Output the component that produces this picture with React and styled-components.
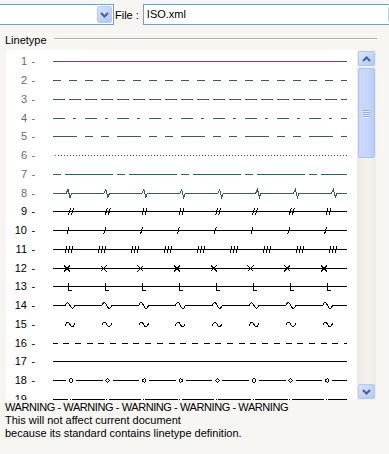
import React from 'react';
import styled, { createGlobalStyle } from 'styled-components';

const GlobalStyle = createGlobalStyle`
  html, body {
    margin: 0;
    padding: 0;
  }
  body {
    background: #f6f5f0;
    font-family: "Liberation Sans", Arial, sans-serif;
    font-size: 11px;
    color: #000;
  }
`;

const Window = styled.div`
  width: 389px;
  height: 454px;
  overflow: hidden;
  background: #f7f6f2;
`;

const TopBar = styled.div`
  display: flex;
  align-items: center;
  padding-top: 4px;
  height: 21px;
  overflow: hidden;
`;

const Combo = styled.div`
  flex: 0 0 ${(p) => p.$width}px;
  height: 21px;
  box-sizing: border-box;
  display: flex;
  align-items: center;
  background: #fff;
  border: 1px solid #7f9db9;
  border-left: ${(p) => (p.$cutLeft ? 'none' : '1px solid #7f9db9')};
  padding: 1px;
  padding-left: 3px;
`;

const ComboText = styled.span`
  flex: 1;
  line-height: 17px;
  white-space: nowrap;
`;

const DropButton = styled.div`
  width: 15px;
  height: 17px;
  box-sizing: border-box;
  display: flex;
  align-items: center;
  justify-content: center;
  background: linear-gradient(135deg, #d9e4fd 0%, #c1d2fb 55%, #b1c6f7 100%);
  border: 1px solid #b8caf5;
  border-radius: 2px;
`;

const FileLabel = styled.span`
  padding: 0 4px 0 1px;
  white-space: nowrap;
`;

const LegendRow = styled.div`
  display: flex;
  align-items: flex-start;
  margin-top: 8px;
  height: 14px;
  padding-left: 5px;
`;

const LegendText = styled.span`
  line-height: 14px;
`;

const Rule = styled.div`
  flex: 1;
  height: 1px;
  margin: 5px 12px 0 7px;
  background: #b3afa2;
  box-shadow: 0 1px 0 #fff;
`;

const Panel = styled.div`
  display: flex;
  margin: 3px 13px 0 6px;
  height: 350px;
`;

const List = styled.div`
  flex: 1;
  background: #fff;
  overflow: hidden;
  padding-top: 2.6px;
`;

const Row = styled.div`
  display: flex;
  align-items: center;
  height: 18.75px;
  color: ${(p) => (p.$muted ? '#5b736b' : '#000')};
`;

const Num = styled.span`
  width: 21px;
  text-align: right;
  line-height: 13px;
`;

const Dash = styled.span`
  width: 21.5px;
  padding-left: 4.5px;
  line-height: 13px;
`;

const Scrollbar = styled.div`
  width: 19px;
  box-sizing: border-box;
  padding: 1px;
  display: flex;
  flex-direction: column;
  background: linear-gradient(90deg, #eeebe2 0%, #f4f2ec 60%, #efece4 100%);
`;

const ScrollButton = styled.div`
  height: 15px;
  box-sizing: border-box;
  display: flex;
  align-items: center;
  justify-content: center;
  background: linear-gradient(135deg, #dce6fe 0%, #c3d4fc 55%, #b3c8f7 100%);
  border: 1px solid #b4c7f3;
  border-radius: 2px;
`;

const Track = styled.div`
  flex: 1;
  padding-top: 2px;
`;

const Thumb = styled.div`
  height: 90px;
  box-sizing: border-box;
  display: flex;
  flex-direction: column;
  align-items: center;
  justify-content: center;
  gap: 1px;
  background: linear-gradient(90deg, #c9d8fd 0%, #c6d6fc 60%, #b9ccf8 100%);
  border: 1px solid #aec3f2;
  border-radius: 2px;
`;

const Grip = styled.div`
  width: 7px;
  height: 1px;
  background: #8ea8e8;
  box-shadow: 0 1px 0 #eef3fe;
`;

const Notes = styled.div`
  padding: 1px 5px 0;
  line-height: 13px;
  white-space: nowrap;
`;

const NoteLine = styled.div`
  letter-spacing: ${(p) => (p.$caps ? '-0.42px' : 'normal')};
`;

const W = 294;
const Y = 9.5;
const at = (first, step, n) => Array.from({ length: n }, (_, i) => first + i * step);

const dashed = (dash, offset = 0, x1 = 0) => (c) => (
  <line x1={x1} y1={Y} x2={W} y2={Y} stroke={c} strokeDasharray={dash} strokeDashoffset={offset} />
);

const solid = (c) => <line x1={0} y1={Y} x2={W} y2={Y} stroke={c} />;

const withMarks = (marks, draw) => (c) => (
  <g stroke={c} fill="none">
    <line x1={0} y1={Y} x2={W} y2={Y} />
    {marks.map((x) => (
      <g key={x}>{draw(x)}</g>
    ))}
  </g>
);

const spikes = (c) => {
  let d = `M0 ${Y}`;
  at(15, 37.9, 8).forEach((x) => {
    d += ` L${x - 2} ${Y} L${x} ${Y - 4} L${x + 2} ${Y + 4} L${x + 3.5} ${Y}`;
  });
  d += ` L${W} ${Y}`;
  return <path d={d} stroke={c} fill="none" />;
};

const bumps = (c) => {
  let d = `M0 ${Y}`;
  at(17, 36.8, 8).forEach((x) => {
    d += ` L${x - 5} ${Y} Q${x - 2.5} ${Y - 6} ${x} ${Y} Q${x + 2.5} ${Y + 6} ${x + 5} ${Y}`;
  });
  d += ` L${W} ${Y}`;
  return <path d={d} stroke={c} fill="none" />;
};

const tildes = (c) => (
  <g stroke={c} fill="none">
    {at(17, 36.8, 8).map((x) => (
      <path
        key={x}
        d={`M${x - 5} ${Y + 1} Q${x - 2.5} ${Y - 5} ${x} ${Y} Q${x + 2.5} ${Y + 5} ${x + 5} ${Y - 1}`}
      />
    ))}
  </g>
);

const circles = (c) => {
  const xs = at(18, 36.6, 8);
  let d = `M0 ${Y}`;
  xs.forEach((x) => {
    d += ` H${x - 5} M${x + 5} ${Y}`;
  });
  d += ` H${W}`;
  return (
    <g stroke={c} fill="none">
      <path d={d} />
      {xs.map((x) => (
        <circle key={x} cx={x} cy={Y} r={1.7} />
      ))}
    </g>
  );
};

const dotted = (c) => {
  const xs = at(17, 36.6, 8);
  let d = `M0 ${Y}`;
  xs.forEach((x) => {
    d += ` H${x - 2} M${x + 2} ${Y}`;
  });
  d += ` H${W}`;
  return (
    <g stroke={c} fill="none">
      <path d={d} />
      {xs.map((x) => (
        <rect key={x} x={x - 0.5} y={Y - 1} width={1} height={1} fill={c} stroke="none" />
      ))}
    </g>
  );
};

const LINETYPES = [
  solid,
  dashed('8 8'),
  dashed('12 4'),
  dashed('12 8 3 9'),
  dashed('24 8 8 8 8 8'),
  dashed('1 2', 0, 2),
  dashed('8 4 48 4'),
  spikes,
  withMarks(at(18, 36.8, 8), (x) => (
    <>
      <line x1={x - 2.5} y1={Y + 3.5} x2={x - 0.5} y2={Y - 3.5} />
      <line x1={x + 0.5} y1={Y + 3.5} x2={x + 2.5} y2={Y - 3.5} />
    </>
  )),
  withMarks(at(15, 36.8, 8), (x) => <line x1={x - 1} y1={Y + 3.5} x2={x + 1} y2={Y - 3.5} />),
  withMarks(at(16, 33, 9), (x) => (
    <>
      <line x1={x - 4} y1={Y + 3} x2={x - 2} y2={Y - 3} />
      <line x1={x - 1} y1={Y + 3} x2={x + 1} y2={Y - 3} />
      <line x1={x + 2} y1={Y + 3} x2={x + 4} y2={Y - 3} />
    </>
  )),
  withMarks(at(14, 36.7, 8), (x) => (
    <>
      <line x1={x - 3} y1={Y - 3} x2={x + 3} y2={Y + 3} />
      <line x1={x - 3} y1={Y + 3} x2={x + 3} y2={Y - 3} />
    </>
  )),
  withMarks(at(15, 37, 8), (x) => (
    <>
      <line x1={x} y1={Y - 4} x2={x} y2={Y + 4} />
      <line x1={x} y1={Y + 4} x2={x + 4} y2={Y + 4} />
    </>
  )),
  bumps,
  tildes,
  dashed('6 5.7', 1.5),
  solid,
  circles,
  dotted,
];

function Chevron({ up }) {
  return (
    <svg width="9" height="6" viewBox="0 0 9 6">
      <path
        d={up ? 'M1 5 L4.5 1.5 L8 5' : 'M1 1 L4.5 4.5 L8 1'}
        stroke="#4d6185"
        strokeWidth="2"
        fill="none"
      />
    </svg>
  );
}

function LinetypeRow({ index, draw }) {
  const muted = index < 8;
  const color = muted ? '#3a5f51' : '#000';
  return (
    <Row $muted={muted}>
      <Num>{index + 1}</Num>
      <Dash>-</Dash>
      <svg width={W} height="19" shapeRendering="crispEdges">
        {draw(color)}
      </svg>
    </Row>
  );
}

export default function App() {
  return (
    <Window>
      <GlobalStyle />
      <TopBar>
        <Combo $width={114} $cutLeft>
          <ComboText />
          <DropButton>
            <Chevron />
          </DropButton>
        </Combo>
        <FileLabel>File :</FileLabel>
        <Combo $width={262}>
          <ComboText>ISO.xml</ComboText>
          <DropButton>
            <Chevron />
          </DropButton>
        </Combo>
      </TopBar>

      <LegendRow>
        <LegendText>Linetype</LegendText>
        <Rule />
      </LegendRow>

      <Panel>
        <List>
          {LINETYPES.map((draw, i) => (
            <LinetypeRow key={i} index={i} draw={draw} />
          ))}
        </List>
        <Scrollbar>
          <ScrollButton>
            <Chevron up />
          </ScrollButton>
          <Track>
            <Thumb>
              <Grip />
              <Grip />
              <Grip />
              <Grip />
            </Thumb>
          </Track>
          <ScrollButton>
            <Chevron />
          </ScrollButton>
        </Scrollbar>
      </Panel>

      <Notes>
        <NoteLine $caps>WARNING - WARNING - WARNING - WARNING - WARNING</NoteLine>
        <NoteLine>This will not affect current document</NoteLine>
        <NoteLine>because its standard contains linetype definition.</NoteLine>
      </Notes>
    </Window>
  );
}
